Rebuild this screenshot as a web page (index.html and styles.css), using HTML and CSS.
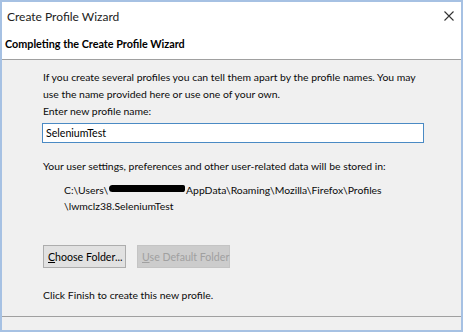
FILE: index.html
```html
<!DOCTYPE html>
<html lang="en">
<head>
    <meta charset="UTF-8">
    <meta name="viewport" content="width=device-width, initial-scale=1.0">
    <title>Create Profile Wizard</title>
    <link rel="stylesheet" href="styles.css">
</head>
<body>
    <div class="window">
        <div class="titlebar">
            <span class="title">Create Profile Wizard</span>
            <span class="close">
                <svg width="10" height="10" viewBox="0 0 10 10">
                    <path d="M0.5 0.5 L9.5 9.5 M9.5 0.5 L0.5 9.5" stroke="#333" stroke-width="1.1" fill="none"/>
                </svg>
            </span>
        </div>
        <div class="header">Completing the Create Profile Wizard</div>

        <div class="content">
            <p class="intro">If you create several profiles you can tell them apart by the profile names. You may<br>use the name provided here or use one of your own.</p>
            <label class="field-label" for="profileName">Enter new profile name:</label>
            <input class="name-input" id="profileName" type="text" value="SeleniumTest">

            <p class="stored">Your user settings, preferences and other user-related data will be stored in:</p>
            <div class="path">C:\Users\<span class="redact"></span>AppData\Roaming\Mozilla\Firefox\Profiles<br>\lwmclz38.SeleniumTest</div>

            <div class="buttons">
                <button class="button"><u>C</u>hoose Folder...</button>
                <button class="button" disabled><u>U</u>se Default Folder</button>
            </div>

            <p class="finish">Click Finish to create this new profile.</p>
        </div>
        <div class="footer"></div>
    </div>
</body>
</html>
```

FILE: styles.css
```css
body {
    margin: 0;
    background-color: #ffffff;
    font-family: Lato, "Noto Sans", sans-serif;
    font-size: 10.4px;
    color: #0a0a0a;
}
.window {
    width: 463px;
    height: 332px;
    box-sizing: border-box;
    border: 2px solid #a6c1e3;
    display: flex;
    flex-direction: column;
    background-color: #f0f0f0;
}
.titlebar {
    height: 28px;
    background-color: #fff;
    display: flex;
    align-items: center;
    justify-content: space-between;
    padding: 0 7px 0 5px;
}
.title {
    font-size: 12px;
    color: #222;
}
.close {
    display: flex;
}
.header {
    height: 27px;
    background-color: #fff;
    font-weight: bold;
    font-size: 10.8px;
    color: #000;
    padding: 0 0 2px 3px;
    display: flex;
    align-items: center;
    border-bottom: 1px solid #a0a0a0;
}
.content {
    flex: 1;
    padding: 9px 10px 0 40px;
}
.intro {
    margin: 0;
    line-height: 17px;
    padding-left: 1px;
    white-space: nowrap;
}
.field-label {
    display: block;
    line-height: 17px;
    padding-left: 1px;
}
.name-input {
    display: block;
    width: 382px;
    height: 20px;
    box-sizing: border-box;
    margin: 3px 0 0 0;
    border: 1px solid #4a8ac4;
    background-color: #fff;
    font-family: inherit;
    font-size: 10.6px;
    padding: 0 3px;
    color: #000;
    outline: none;
}
.stored {
    margin: 15px 0 0 0;
    line-height: 17px;
    padding-left: 1px;
}
.path {
    margin-top: 7px;
    padding-left: 22px;
    line-height: 16px;
}
.redact {
    display: inline-block;
    width: 76px;
    height: 7px;
    background-color: #000;
    border-radius: 4px 2px 3px 4px;
    vertical-align: 2px;
    margin: 0 1px;
}
.buttons {
    display: flex;
    gap: 11px;
    margin: 31px 0 0 1px;
}
.button {
    height: 23px;
    box-sizing: border-box;
    border: 1px solid #adadad;
    background-color: #e1e1e1;
    font-family: inherit;
    font-size: 10.6px;
    color: #000;
    padding: 0 4px;
    white-space: nowrap;
}
.button:first-child {
    width: 83px;
}
.button:disabled {
    width: 93px;
    background-color: #cccccc;
    border-color: #c4c4c4;
    color: #a0a0a0;
}
.finish {
    margin: 19px 0 0 0;
    line-height: 17px;
    padding-left: 1px;
}
.footer {
    height: 13px;
    border-top: 1px solid #a0a0a0;
}
```
